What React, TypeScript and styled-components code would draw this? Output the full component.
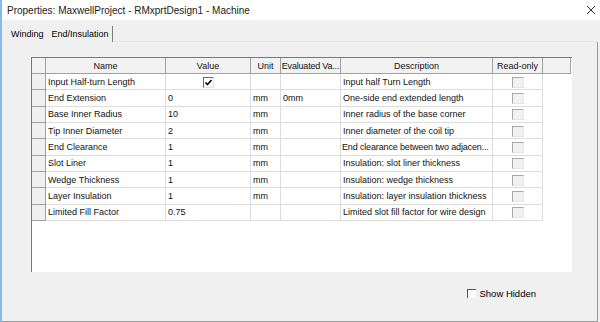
import React from "react";
import styled, { createGlobalStyle } from "styled-components";

const GlobalStyle = createGlobalStyle`
  html, body { margin: 0; padding: 0; background: #f0f0f0; }
  body { font-family: "Liberation Sans", Arial, sans-serif; color: #000; }
`;

const Window = styled.div`
  width: 600px;
  height: 322px;
  box-sizing: border-box;
  border-left: 2px solid #86bde8;
  background: #f0f0f0;
  display: flex;
  flex-direction: column;
  overflow: hidden;
`;

const TitleBar = styled.div`
  height: 20px;
  flex: none;
  background: #ffffff;
  display: flex;
  align-items: center;
  justify-content: space-between;
  padding: 0 3px 0 5px;
  font-size: 10px;
  color: #1a1a1a;
`;

const CloseIcon = styled.svg`
  width: 10px;
  height: 10px;
  margin-right: 1px;
`;

const TabStrip = styled.div`
  height: 22px;
  flex: none;
  display: flex;
  align-items: flex-end;
  padding-left: 7px;
  margin-right: 2px;
`;

const Tab = styled.div<{ $active?: boolean }>`
  height: 16px;
  box-sizing: border-box;
  display: flex;
  align-items: center;
  padding: ${(p) => (p.$active ? "0 3px 0 4px" : "0 4px 0 2px")};
  font-size: 9px;
  border-right: ${(p) => (p.$active ? "1px solid #7d7d7d" : "none")};
`;

const TabFill = styled.div`
  flex: 1;
  align-self: flex-end;
  height: 1px;
  background: #e6e6e6;
`;

const TabPanel = styled.div`
  flex: 1;
  margin-right: 2px;
  box-sizing: border-box;
  border-right: 1px solid #9a9a9a;
  border-bottom: 1px solid #9a9a9a;
  padding: 15px 0 0 29px;
  display: flex;
  flex-direction: column;
`;

const GridBox = styled.div`
  width: 541px;
  height: 215px;
  box-sizing: border-box;
  background: #ffffff;
  border-top: 1px solid #787878;
  border-left: 1px solid #787878;
`;

const Table = styled.table`
  border-spacing: 0;
  table-layout: fixed;
  width: 539px;
  font-size: 9px;
`;

const HeadCell = styled.th<{ $w: number; $tight?: boolean }>`
  width: ${(p) => p.$w}px;
  height: 16px;
  padding: 0 ${(p) => (p.$tight ? "0" : "2px")};
  box-sizing: border-box;
  background: #f2f2f2;
  border-right: 1px solid #a0a0a0;
  border-bottom: 1px solid #a0a0a0;
  font-weight: normal;
  text-align: center;
  white-space: nowrap;
  overflow: hidden;
  letter-spacing: ${(p) => (p.$tight ? "-0.2px" : "0")};
  color: #111;
`;

const RowHead = styled.td`
  background: #f0f0f0;
  border-right: 1px solid #a0a0a0;
  border-bottom: 1px solid #a0a0a0;
  padding: 0;
`;

const Row = styled.tr`
  height: 16.33px;
`;

const Cell = styled.td<{ $center?: boolean; $tight?: boolean }>`
  padding: 0 ${(p) => (p.$tight ? "0 0 1px" : "2px")};
  border-right: 1px solid #dcdcdc;
  border-bottom: 1px solid #dcdcdc;
  white-space: nowrap;
  overflow: hidden;
  text-align: ${(p) => (p.$center ? "center" : "left")};
  letter-spacing: ${(p) => (p.$tight ? "-0.15px" : "0")};
  vertical-align: middle;
  color: #111;
  line-height: 12px;
`;

const CheckBox = styled.span`
  display: inline-flex;
  width: 11px;
  height: 11px;
  box-sizing: border-box;
  background: #fff;
  border-top: 1px solid #6a6a6a;
  border-left: 1px solid #6a6a6a;
  border-right: 1px solid #e0e0e0;
  border-bottom: 1px solid #e0e0e0;
  vertical-align: middle;
  align-items: center;
  justify-content: center;
`;

const ReadOnlyBox = styled.span`
  display: inline-block;
  width: 12px;
  height: 11px;
  box-sizing: border-box;
  background: #f1f1f1;
  border-top: 1px solid #a8a8a8;
  border-left: 1px solid #a8a8a8;
  border-right: 1px solid #e6e6e6;
  border-bottom: 1px solid #e6e6e6;
  vertical-align: middle;
  margin-left: 1px;
`;

const Footer = styled.div`
  display: flex;
  justify-content: flex-end;
  align-items: center;
  margin-top: 16px;
  padding-right: 61px;
  font-size: 9.5px;
  gap: 3px;
`;

const SmallBox = styled.span`
  width: 9px;
  height: 9px;
  box-sizing: border-box;
  border-top: 1px solid #555;
  border-left: 1px solid #555;
  background: #fbfbfb;
`;

const cols = [
  { label: "", w: 14 },
  { label: "Name", w: 120 },
  { label: "Value", w: 85 },
  { label: "Unit", w: 30 },
  { label: "Evaluated Va...", w: 60, tight: true },
  { label: "Description", w: 152 },
  { label: "Read-only", w: 50 },
  { label: "", w: 28 },
];

type RowData = {
  name: string;
  value: string | null;
  unit: string;
  evaluated: string;
  desc: string;
};

const rows: RowData[] = [
  { name: "Input Half-turn Length", value: null, unit: "", evaluated: "", desc: "Input half Turn Length" },
  { name: "End Extension", value: "0", unit: "mm", evaluated: "0mm", desc: "One-side end extended length" },
  { name: "Base Inner Radius", value: "10", unit: "mm", evaluated: "", desc: "Inner radius of the base corner" },
  { name: "Tip Inner Diameter", value: "2", unit: "mm", evaluated: "", desc: "Inner diameter of the coil tip" },
  { name: "End Clearance", value: "1", unit: "mm", evaluated: "", desc: "End clearance between two adjacen..." },
  { name: "Slot Liner", value: "1", unit: "mm", evaluated: "", desc: "Insulation: slot liner thickness" },
  { name: "Wedge Thickness", value: "1", unit: "mm", evaluated: "", desc: "Insulation: wedge thickness" },
  { name: "Layer Insulation", value: "1", unit: "mm", evaluated: "", desc: "Insulation: layer insulation thickness" },
  { name: "Limited Fill Factor", value: "0.75", unit: "", evaluated: "", desc: "Limited slot fill factor for wire design" },
];

export default function App() {
  return (
    <>
      <GlobalStyle />
      <Window>
        <TitleBar>
          <span>Properties: MaxwellProject - RMxprtDesign1 - Machine</span>
          <CloseIcon viewBox="0 0 10 10">
            <path d="M1 1 L9 9 M9 1 L1 9" stroke="#333" strokeWidth="1" fill="none" />
          </CloseIcon>
        </TitleBar>
        <TabStrip>
          <Tab>Winding</Tab>
          <Tab $active>End/Insulation</Tab>
          <TabFill />
        </TabStrip>
        <TabPanel>
          <GridBox>
            <Table>
              <thead>
                <tr>
                  {cols.map((c, i) => (
                    <HeadCell key={i} $w={c.w} $tight={c.tight}>
                      {c.label}
                    </HeadCell>
                  ))}
                </tr>
              </thead>
              <tbody>
                {rows.map((r) => (
                  <Row key={r.name}>
                    <RowHead />
                    <Cell>{r.name}</Cell>
                    <Cell $center={r.value === null}>
                      {r.value === null ? (
                        <CheckBox>
                          <svg width="9" height="9" viewBox="0 0 9 9">
                            <path d="M1.5 4.5 L3.5 6.5 L7.5 2" stroke="#000" strokeWidth="1.6" fill="none" />
                          </svg>
                        </CheckBox>
                      ) : (
                        r.value
                      )}
                    </Cell>
                    <Cell>{r.unit}</Cell>
                    <Cell>{r.evaluated}</Cell>
                    <Cell $tight={r.desc.endsWith("...")}>{r.desc}</Cell>
                    <Cell $center>
                      <ReadOnlyBox />
                    </Cell>
                  </Row>
                ))}
              </tbody>
            </Table>
          </GridBox>
          <Footer>
            <SmallBox />
            <span>Show Hidden</span>
          </Footer>
        </TabPanel>
      </Window>
    </>
  );
}
